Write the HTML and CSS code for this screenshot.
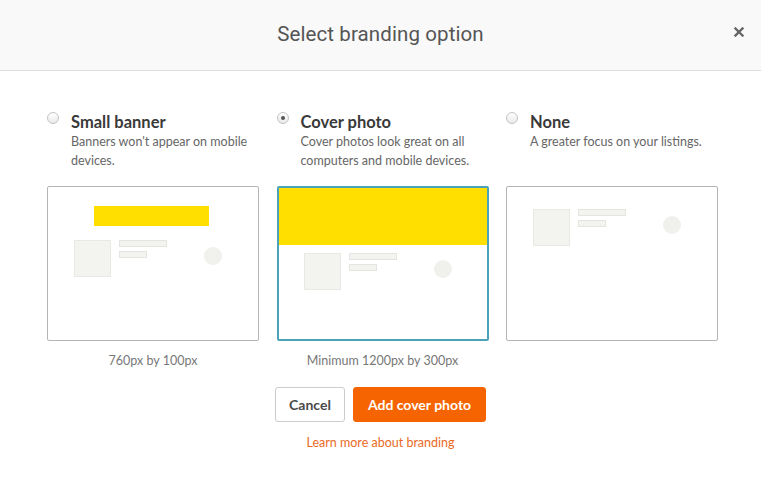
FILE: index.html
```html
<!DOCTYPE html>
<html lang="en">
<head>
    <meta charset="UTF-8">
    <meta name="viewport" content="width=device-width, initial-scale=1.0">
    <title>Select branding option</title>
    <link rel="stylesheet" href="styles.css">
</head>
<body>
    <div class="modal">
        <div class="modal-header">
            <h1>Select branding option</h1>
            <button class="close" aria-label="Close">
                <svg width="10" height="10" viewBox="0 0 10 10">
                    <path d="M1.5 1.5 L8.5 8.5 M8.5 1.5 L1.5 8.5" stroke="#666" stroke-width="2.4" stroke-linecap="square"/>
                </svg>
            </button>
        </div>

        <div class="modal-body">
            <div class="options">
                <div class="option">
                    <label class="option-label">
                        <span class="radio"></span>
                        <span class="option-text">
                            <span class="option-title">Small banner</span>
                            <span class="option-desc">Banners won't appear on mobile devices.</span>
                        </span>
                    </label>
                    <div class="preview preview-banner">
                        <div class="small-banner"></div>
                        <div class="listing">
                            <div class="thumb"></div>
                            <div class="lines">
                                <div class="line"></div>
                                <div class="line short"></div>
                            </div>
                            <div class="avatar"></div>
                        </div>
                    </div>
                    <p class="caption">760px by 100px</p>
                </div>

                <div class="option">
                    <label class="option-label">
                        <span class="radio checked"></span>
                        <span class="option-text">
                            <span class="option-title">Cover photo</span>
                            <span class="option-desc">Cover photos look great on all computers and mobile devices.</span>
                        </span>
                    </label>
                    <div class="preview preview-cover selected">
                        <div class="cover"></div>
                        <div class="listing">
                            <div class="thumb"></div>
                            <div class="lines">
                                <div class="line"></div>
                                <div class="line short"></div>
                            </div>
                            <div class="avatar"></div>
                        </div>
                    </div>
                    <p class="caption">Minimum 1200px by 300px</p>
                </div>

                <div class="option">
                    <label class="option-label">
                        <span class="radio"></span>
                        <span class="option-text">
                            <span class="option-title">None</span>
                            <span class="option-desc">A greater focus on your listings.</span>
                        </span>
                    </label>
                    <div class="preview preview-none">
                        <div class="listing">
                            <div class="thumb"></div>
                            <div class="lines">
                                <div class="line"></div>
                                <div class="line short"></div>
                            </div>
                            <div class="avatar"></div>
                        </div>
                    </div>
                </div>
            </div>

            <div class="actions">
                <button class="btn btn-secondary">Cancel</button>
                <button class="btn btn-primary">Add cover photo</button>
            </div>
            <a class="learn-more" href="#">Learn more about branding</a>
        </div>
    </div>
</body>
</html>
```

FILE: styles.css
```css
body {
    margin: 0;
    background-color: #ffffff;
    font-family: 'Lato', 'Open Sans', sans-serif;
    color: #444;
}

.modal {
    width: 761px;
    height: 483px;
    background-color: #ffffff;
}

.modal-header {
    height: 70px;
    background-color: #f9f9f9;
    border-bottom: 1px solid #dedede;
    display: flex;
    align-items: center;
    justify-content: center;
    position: relative;
}

.modal-header h1 {
    margin: 0 0 2px;
    font-family: 'Roboto', sans-serif;
    font-weight: 400;
    font-size: 20.5px;
    color: #555;
    letter-spacing: 0.1px;
}

.close {
    position: absolute;
    right: 16px;
    top: 26px;
    width: 12px;
    height: 12px;
    padding: 0;
    border: none;
    background: none;
    cursor: pointer;
    display: flex;
    align-items: center;
    justify-content: center;
}

.modal-body {
    padding: 40px 0 0 47px;
}

.options {
    display: grid;
    grid-template-columns: 212px 212px 212px;
    column-gap: 17.5px;
}

.option-label {
    display: flex;
    align-items: flex-start;
    height: 58px;
    margin-bottom: 17px;
    cursor: pointer;
}

.radio {
    flex: none;
    width: 10px;
    height: 10px;
    margin: 1px 12px 0 0;
    border: 1px solid #c4c4c4;
    border-radius: 50%;
    background: linear-gradient(#ffffff, #e9e9e9);
    position: relative;
}

.radio.checked::after {
    content: "";
    position: absolute;
    left: 3px;
    top: 3px;
    width: 4px;
    height: 4px;
    border-radius: 50%;
    background-color: #555;
}

.option-text {
    display: flex;
    flex-direction: column;
    padding-top: 1px;
}

.option-title {
    font-size: 16.5px;
    font-weight: 700;
    line-height: 20px;
    color: #3a3a3a;
}

.option-desc {
    font-size: 12.5px;
    line-height: 19px;
    color: #666;
}

.preview {
    box-sizing: border-box;
    height: 155px;
    border: 1px solid #b5b5b5;
    border-radius: 2px;
    padding-left: 26px;
}

.preview.selected {
    border: 2px solid #4aa3b8;
    padding-left: 25px;
}

.small-banner {
    width: 115px;
    height: 20px;
    margin: 19px 0 0 20px;
    background-color: #ffdf00;
}

.cover {
    height: 57px;
    margin-left: -25px;
    background-color: #ffdf00;
}

.listing {
    display: flex;
    align-items: flex-start;
}

.preview-banner .listing {
    margin-top: 14px;
}

.preview-cover .listing {
    margin-top: 8px;
}

.preview-none .listing {
    margin-top: 22px;
}

.thumb {
    width: 35px;
    height: 35px;
    background-color: #f3f3f0;
    border: 1px solid #e8e8e4;
}

.lines {
    display: flex;
    flex-direction: column;
    gap: 4px;
    margin-left: 8px;
}

.line {
    width: 46px;
    height: 5px;
    background-color: #f3f3f0;
    border: 1px solid #e4e4e0;
}

.line.short {
    width: 26px;
}

.avatar {
    width: 18px;
    height: 18px;
    margin: 7px 0 0 37px;
    border-radius: 50%;
    background-color: #f0f0ed;
}

.caption {
    margin: 12px 0 0;
    font-size: 12.5px;
    line-height: 16px;
    text-align: center;
    color: #777;
}

.actions {
    display: flex;
    justify-content: center;
    gap: 8px;
    margin: 18px 0 0 -47px;
}

.btn {
    height: 35px;
    padding: 0;
    border-radius: 3px;
    font-family: 'Lato', 'Open Sans', sans-serif;
    font-size: 14px;
    font-weight: 700;
    cursor: pointer;
}

.btn-secondary {
    width: 70px;
    background-color: #ffffff;
    border: 1px solid #cccccc;
    color: #4a4a4a;
}

.btn-primary {
    width: 133px;
    background-color: #f56400;
    border: 1px solid #f56400;
    color: #ffffff;
}

.learn-more {
    display: block;
    margin: 13px 0 0 -47px;
    font-size: 12.5px;
    line-height: 16px;
    text-align: center;
    color: #ea6a26;
    text-decoration: none;
}
```
